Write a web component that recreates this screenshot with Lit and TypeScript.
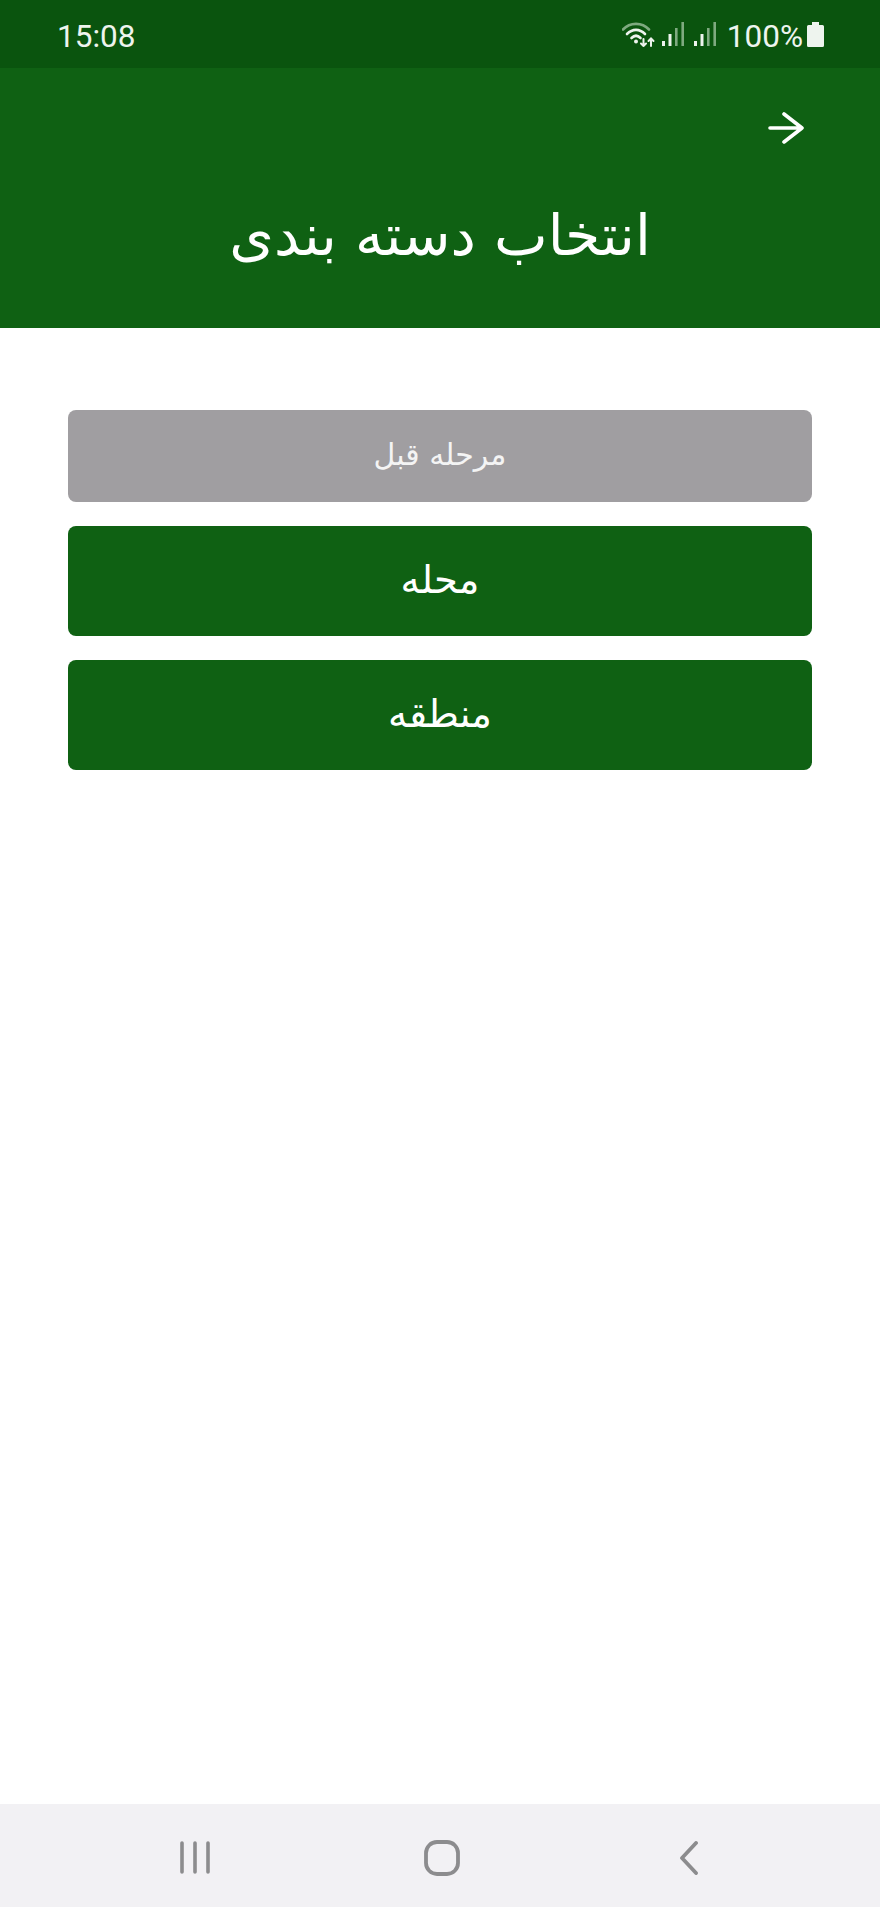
import { LitElement, html, css } from "lit";
import { customElement } from "lit/decorators.js";

@customElement("app-root")
export class AppRoot extends LitElement {
  static styles = css`
    :host {
      display: flex;
      flex-direction: column;
      width: 880px;
      height: 1907px;
      background: #fff;
      font-family: "DejaVu Sans", sans-serif;
      overflow: hidden;
    }
    svg { display: block; }
    .status {
      height: 68px;
      flex: none;
      box-sizing: border-box;
      background: #0a540e;
      color: #eef4ee;
      display: flex;
      align-items: center;
      justify-content: space-between;
      padding: 0 56px 0 57px;
      font-family: Roboto, sans-serif;
      font-size: 31.5px;
    }
    .status span { padding-top: 4px; }
    .status-right { display: flex; align-items: center; }
    .wifi { margin-right: 7px; }
    .sig2 { margin-left: 10px; }
    .pct { margin-left: 11px; margin-right: 4px; }
    .header {
      height: 260px;
      flex: none;
      box-sizing: border-box;
      background: #0f6113;
      color: #fff;
      display: flex;
      flex-direction: column;
      padding: 44px 76px 0;
    }
    .back { align-self: flex-end; }
    .title {
      margin: 56px 0 0;
      text-align: center;
      font-size: 57px;
      font-weight: 400;
      line-height: 70px;
      direction: rtl;
    }
    .main {
      flex: 1;
      display: flex;
      flex-direction: column;
      gap: 24px;
      padding: 82px 68px 0;
    }
    .btn {
      display: flex;
      align-items: center;
      justify-content: center;
      height: 110px;
      padding-bottom: 4px;
      box-sizing: border-box;
      border-radius: 8px;
      background: #0f6113;
      color: #fff;
      font-size: 38.5px;
      direction: rtl;
    }
    .btn.prev {
      height: 92px;
      background: #a09ea1;
      color: #f4f4f4;
      font-size: 30px;
    }
    .nav {
      height: 103px;
      flex: none;
      background: #f2f1f4;
      display: grid;
      grid-template-columns: repeat(3, 1fr);
      align-items: center;
      justify-items: center;
      padding: 4px 68px 0 72px;
      box-sizing: border-box;
    }
  `;

  render() {
    const signal = (cls: string) => html`<svg class=${cls} width="22" height="24" viewBox="0 0 22 24">
      <rect x="0" y="19" width="3" height="5" fill="#eef4ee"/>
      <rect x="6.5" y="12" width="3" height="12" fill="#eef4ee"/>
      <rect x="13" y="6" width="2.6" height="18" fill="#7faa80"/>
      <rect x="19.4" y="0" width="2.6" height="24" fill="#7faa80"/>
    </svg>`;
    return html`
      <div class="status">
        <span>15:08</span>
        <div class="status-right">
          <svg class="wifi" width="33" height="25" viewBox="0 0 33 25" fill="none" stroke-linecap="round">
            <path d="M1 7.5C8 0 20 0 27 7.5" stroke="#7faa80" stroke-width="2.6"/>
            <path d="M5 12C10.500 6.500 17.500 6.500 23 12" stroke="#eef4ee" stroke-width="2.6"/>
            <path d="M9.500 16C12.500 13 15.500 13 18.500 16" stroke="#eef4ee" stroke-width="2.6"/>
            <circle cx="14" cy="19.500" r="2" fill="#eef4ee"/>
            <path d="M21.500 17V24M19 21.500L21.500 24L24 21.500" stroke="#eef4ee" stroke-width="2"/>
            <path d="M29 24V16.500M26.500 19L29 16.500L31.500 19" stroke="#eef4ee" stroke-width="2"/>
          </svg>
          ${signal("sig1")}
          ${signal("sig2")}
          <span class="pct">100%</span>
          <svg width="17" height="25" viewBox="0 0 17 25"><path d="M5 0H12V3H15.500Q17 3 17 4.500V23.500Q17 25 15.500 25H1.500Q0 25 0 23.500V4.500Q0 3 1.500 3H5Z" fill="#eef4ee"/></svg>
        </div>
      </div>
      <header class="header">
        <svg class="back" width="36" height="32" viewBox="0 0 36 32" fill="none" stroke="#fff" stroke-width="3.6" stroke-linecap="round" stroke-linejoin="round">
          <path d="M2 16H34M16 2L34 16L16 30"/>
        </svg>
        <h1 class="title">انتخاب دسته بندی</h1>
      </header>
      <main class="main">
        <div class="btn prev">مرحله قبل</div>
        <div class="btn">محله</div>
        <div class="btn">منطقه</div>
      </main>
      <nav class="nav">
        <svg width="30" height="33" viewBox="0 0 30 33" stroke="#8c8c8e" stroke-width="3.6" stroke-linecap="round">
          <path d="M2 2V31M15 2V31M28 2V31"/>
        </svg>
        <svg width="36" height="36" viewBox="0 0 36 36" fill="none" stroke="#8c8c8e" stroke-width="3.8">
          <rect x="2" y="2" width="32" height="32" rx="11"/>
        </svg>
        <svg width="20" height="34" viewBox="0 0 20 34" fill="none" stroke="#8c8c8e" stroke-width="3.8" stroke-linecap="round" stroke-linejoin="round">
          <path d="M17 2L3 17L17 32"/>
        </svg>
      </nav>
    `;
  }
}
